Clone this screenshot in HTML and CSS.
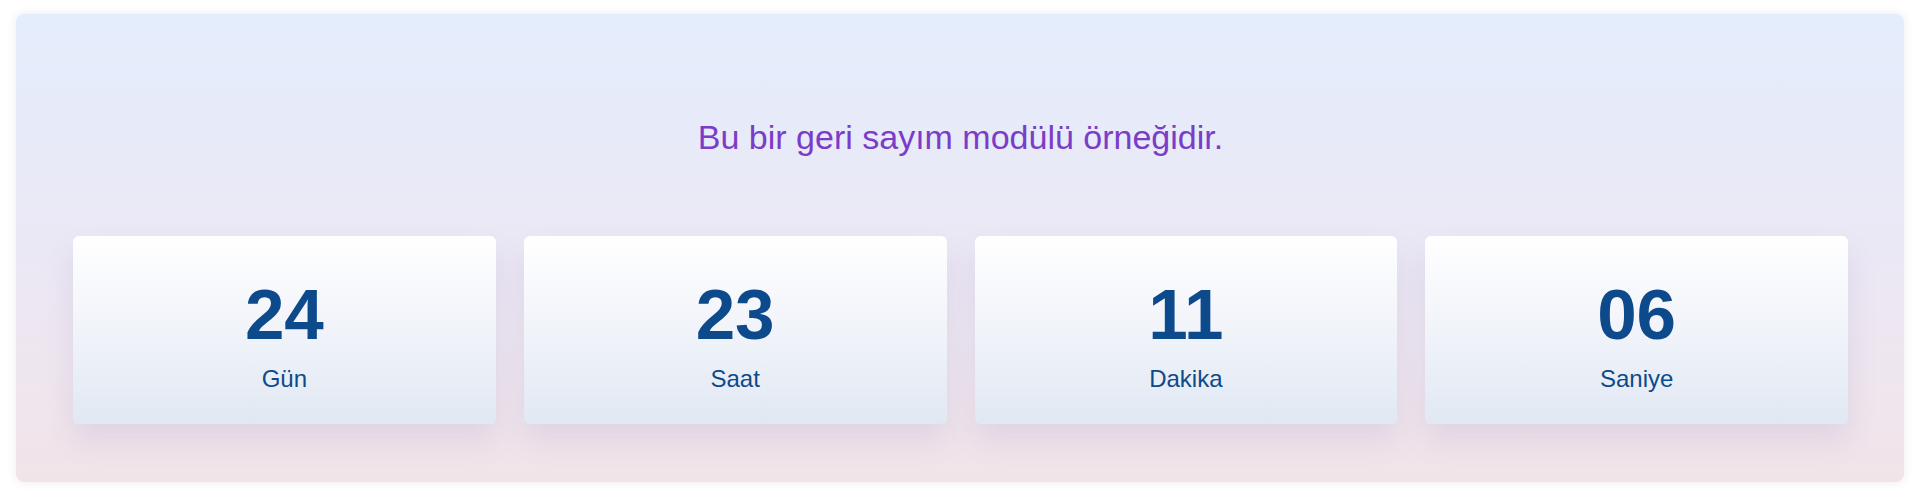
FILE: index.html
```html
<!DOCTYPE html>
<html lang="tr">
<head>
<meta charset="utf-8">
<title>Geri Sayım</title>
<link rel="stylesheet" href="styles.css">
</head>
<body>
<div class="page">
  <section class="countdown">
    <h2 class="title">Bu bir geri sayım modülü örneğidir.</h2>
    <div class="cards">
      <div class="card"><div class="num">24</div><div class="label">Gün</div></div>
      <div class="card"><div class="num">23</div><div class="label">Saat</div></div>
      <div class="card"><div class="num">11</div><div class="label">Dakika</div></div>
      <div class="card"><div class="num">06</div><div class="label">Saniye</div></div>
    </div>
  </section>
</div>
</body>
</html>
```

FILE: styles.css
```css
html, body {
  margin: 0;
  padding: 0;
  background: #ffffff;
}
body {
  font-family: "Liberation Sans", Arial, sans-serif;
}
.page {
  padding: 14px 16px 15px 16px;
}
.countdown {
  box-sizing: border-box;
  height: 468px;
  border-radius: 8px;
  background: linear-gradient(180deg, #e4edfc 0%, #ebe8f5 50%, #f1e4e9 100%);
  box-shadow: 0 0 10px rgba(60, 60, 120, 0.10);
  padding: 104px 56px 56px 57px;
}
.title {
  margin: 0;
  text-align: center;
  font-size: 34px;
  font-weight: normal;
  line-height: 39px;
  color: #7b3cc8;
}
.cards {
  margin-top: 79px;
  display: grid;
  grid-template-columns: repeat(4, 1fr);
  gap: 28px;
}
.card {
  box-sizing: border-box;
  height: 188px;
  border-radius: 6px;
  background: linear-gradient(180deg, #ffffff 0%, #f4f6fb 40%, #e1e8f3 100%);
  box-shadow: 0 16px 30px rgba(110, 80, 160, 0.12);
  padding-top: 38px;
  text-align: center;
  color: #0d4a8c;
}
.num {
  font-size: 71px;
  font-weight: bold;
  line-height: 82px;
}
.label {
  margin-top: 9px;
  font-size: 24px;
  line-height: 28px;
}
```
